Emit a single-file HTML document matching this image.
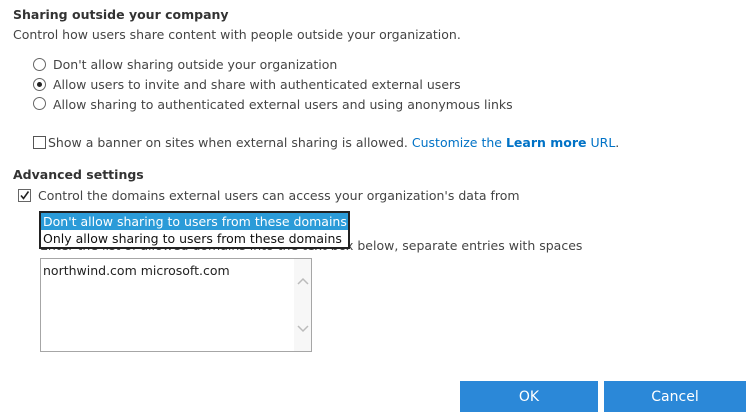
<!DOCTYPE html>
<html><head><style>
body{margin:0;width:752px;height:419px;background:#fff;font-family:"Segoe UI","DejaVu Sans","Liberation Sans",sans-serif;font-size:12.5px;color:#444;position:relative;overflow:hidden}
.a{position:absolute;white-space:nowrap;line-height:16px}
.b{font-weight:bold;color:#333}
.r{position:absolute;width:13px;height:13px;border:1px solid #666;border-radius:50%;box-sizing:border-box}
.cb{position:absolute;width:13px;height:13px;border:1px solid #666;box-sizing:border-box;background:#fff}
a{color:#0072c6;text-decoration:none}
.btn{position:absolute;top:381px;height:31px;background:#2b88d8;color:#fff;font-size:14px;text-align:center;line-height:33px}
</style></head><body>
<div class="a b" style="left:13px;top:7px">Sharing outside your company</div>
<div class="a" style="left:13px;top:27px">Control how users share content with people outside your organization.</div>
<div class="r" style="left:33px;top:58px"></div>
<div class="a" style="left:53px;top:57px">Don't allow sharing outside your organization</div>
<div class="r" style="left:33px;top:78px"><div style="position:absolute;left:3px;top:3px;width:5px;height:5px;border-radius:50%;background:#222"></div></div>
<div class="a" style="left:53px;top:77px">Allow users to invite and share with authenticated external users</div>
<div class="r" style="left:33px;top:97px"></div>
<div class="a" style="left:53px;top:97px">Allow sharing to authenticated external users and using anonymous links</div>
<div class="cb" style="left:33px;top:136px;border-color:#555"></div>
<div class="a" style="left:48px;top:135px">Show a banner on sites when external sharing is allowed. <a>Customize the <b>Learn more</b> URL</a>.</div>
<div class="a b" style="left:13px;top:167px">Advanced settings</div>
<div class="cb" style="left:18px;top:189px"><svg width="11" height="11" style="position:absolute;left:0;top:0"><path d="M2 5.5L4.5 8.5L9.5 1.5" stroke="#222" stroke-width="1.6" fill="none"/></svg></div>
<div class="a" style="left:38px;top:188px">Control the domains external users can access your organization's data from</div>
<div class="a" style="left:40px;top:238px;color:#444">Enter the list of allowed domains into the text box below, separate entries with spaces</div>
<div style="position:absolute;left:39px;top:211px;width:307px;height:34px;border:2px solid #222;background:#fff">
<div style="height:17px;background:#2b9bd8;color:#fff;line-height:17px;padding-left:2px">Don't allow sharing to users from these domains</div>
<div style="height:17px;color:#111;line-height:17px;padding-left:2px">Only allow sharing to users from these domains</div>
</div>
<div style="position:absolute;left:40px;top:258px;width:272px;height:94px;border:1px solid #a6a6a6;box-sizing:border-box">
<div style="position:absolute;right:0;top:0;width:17px;height:92px;background:#f7f7f7"></div>
<div class="a" style="left:2px;top:4px;color:#222">northwind.com microsoft.com</div>
<svg width="12" height="8" style="position:absolute;left:256px;top:18px"><path d="M1 7L6 2L11 7" stroke="#bbb" stroke-width="1.5" fill="none"/></svg>
<svg width="12" height="8" style="position:absolute;left:256px;top:66px"><path d="M1 1L6 6L11 1" stroke="#bbb" stroke-width="1.5" fill="none"/></svg>
</div>
<div class="btn" style="left:460px;width:138px">OK</div>
<div class="btn" style="left:604px;width:142px">Cancel</div>
</body></html>
